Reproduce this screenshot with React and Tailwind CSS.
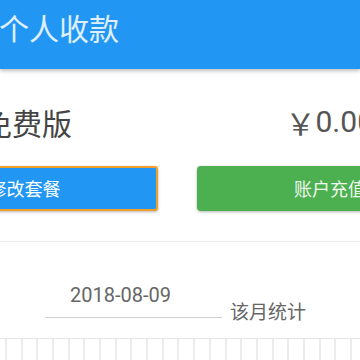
import React from "react";

const cjk = { fontFamily: '"Noto Sans CJK SC", "Noto Sans", sans-serif' };
const num = { fontFamily: 'Roboto, "Noto Sans CJK SC", sans-serif' };

export default function App() {
  const cols = Array.from({ length: 22 });
  return (
    <div className="w-[360px] h-[360px] overflow-hidden bg-white relative" style={cjk}>
      <div className="h-[69px] bg-[#2196F3] shadow-[0_2px_4px_rgba(0,0,0,0.25)] relative z-10 pt-[12px]">
        <div className="-ml-[1px] text-[30px] leading-[30px] text-white/85">个人收款</div>
      </div>

      <div className="pt-[36px]">
        <div className="-ml-[18px] w-[392px] flex justify-between items-center h-[34px]">
          <span className="text-[30px] leading-[34px] text-[#444]">免费版</span>
          <span className="text-[30px] leading-[34px] text-[#555] flex items-center" style={num}>
            <span style={cjk} className="text-[30px]">￥</span>
            <span>0.00</span>
          </span>
        </div>
      </div>

      <div className="-ml-[109px] w-[600px] flex gap-[39px] mt-[27px]">
        <button className="w-[267px] h-[45px] bg-[#2196F3] border-2 border-[#F0A02A] rounded-[3px] shadow-[0_1px_3px_rgba(0,0,0,0.3)] text-white text-[18px] flex items-center justify-center">
          修改套餐
        </button>
        <button className="w-[266px] h-[45px] bg-[#4CAF50] rounded-[4px] shadow-[0_1px_3px_rgba(0,0,0,0.3)] text-white/90 text-[18px] flex items-center justify-center">
          账户充值
        </button>
      </div>

      <div className="mt-[30px] border-t border-[#ececec]" />

      <div className="flex items-end h-[76px]">
        <div className="ml-[45px] w-[177px] border-b border-[#cfcfcf] pl-[25px] pb-[12px]">
          <div className="text-[20px] leading-[20px] text-[#666]" style={num}>2018-08-09</div>
        </div>
        <div className="ml-[8px] text-[19px] leading-[19px] text-[#666] -mb-[2px]">该月统计</div>
      </div>

      <div className="mt-[20px] border-t border-[#e6e6e6]">
        <div className="ml-[5px] w-[347px] h-[30px] grid grid-cols-[repeat(22,1fr)] border-r-2 border-[#ececec]">
          {cols.map((_, i) => (
            <div key={i} className="border-l-2 border-[#ececec]" />
          ))}
        </div>
      </div>
    </div>
  );
}
